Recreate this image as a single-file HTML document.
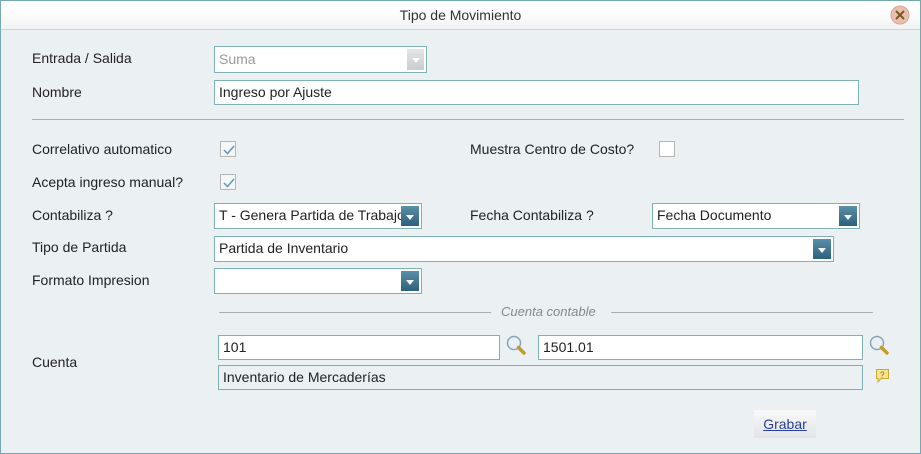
<!DOCTYPE html>
<html><head><meta charset="utf-8"><style>
*{box-sizing:border-box}
body{margin:0;width:921px;height:454px;overflow:hidden;font-family:"Liberation Sans",sans-serif;font-size:14px;color:#222}
.win{position:absolute;left:0;top:0;width:921px;height:454px;border:1px solid #74a9ad;background:#ebf0f3}
.title{position:absolute;left:0;top:0;width:919px;height:29px;background:linear-gradient(#fff 30%,#f1f2f3);border-bottom:1px solid #cfd3d5;text-align:center;line-height:29px;color:#333;font-size:14px}
.a{position:absolute}
.lbl{position:absolute;line-height:16px}
.inp{position:absolute;background:#fff;border:1px solid #7fb0b4;padding-left:4px;line-height:22px;white-space:nowrap;overflow:hidden}
.arr{position:absolute;right:2px;top:2px;bottom:2px;width:18px;background:linear-gradient(#5a8fa8,#2d607c)}
.arr:after{content:"";position:absolute;left:5px;top:9px;border-left:4px solid transparent;border-right:4px solid transparent;border-top:5px solid #fff}
.cb{position:absolute;width:16px;height:16px;border:1px solid #b5b5b5;background:#f4f6f7}
.cb svg{position:absolute;left:1px;top:1px}
</style></head><body>
<div class="win">
<div class="title">Tipo de Movimiento</div>
<svg class="a" style="left:889px;top:4px" width="20" height="20"><circle cx="10" cy="10" r="9" fill="#e9c0b0" stroke="#d8a593"/><path d="M6 6L14 14M14 6L6 14" stroke="#7a5a20" stroke-width="2"/></svg>

<div class="lbl" style="left:31px;top:49px">Entrada / Salida</div>
<div class="inp" style="left:213px;top:45px;width:213px;height:27px;color:#999;line-height:25px">Suma<div class="arr" style="background:linear-gradient(#e3e6e8,#c9cdd0);width:17px"></div></div>
<div class="lbl" style="left:31px;top:83px">Nombre</div>
<div class="inp" style="left:213px;top:79px;width:645px;height:25px">Ingreso por Ajuste</div>
<div class="a" style="left:31px;top:118px;width:872px;height:1px;background:#a8b0b3"></div>

<div class="lbl" style="left:31px;top:140px">Correlativo automatico</div>
<div class="cb" style="left:219px;top:140px"><svg width="14" height="14"><path d="M2 7L5.5 10.5L12 3" stroke="#5a9ab8" stroke-width="1.5" fill="none"/></svg></div>
<div class="lbl" style="left:469px;top:140px">Muestra Centro de Costo?</div>
<div class="cb" style="left:658px;top:140px;background:#fff"></div>
<div class="lbl" style="left:31px;top:173px">Acepta ingreso manual?</div>
<div class="cb" style="left:219px;top:173px"><svg width="14" height="14"><path d="M2 7L5.5 10.5L12 3" stroke="#5a9ab8" stroke-width="1.5" fill="none"/></svg></div>

<div class="lbl" style="left:31px;top:206px">Contabiliza ?</div>
<div class="inp" style="left:213px;top:202px;width:208px;height:26px">T - Genera Partida de Trabajo<div class="arr"></div></div>
<div class="lbl" style="left:469px;top:206px">Fecha Contabiliza ?</div>
<div class="inp" style="left:651px;top:202px;width:208px;height:26px">Fecha Documento<div class="arr"></div></div>
<div class="lbl" style="left:31px;top:238px">Tipo de Partida</div>
<div class="inp" style="left:213px;top:235px;width:620px;height:26px">Partida de Inventario<div class="arr"></div></div>
<div class="lbl" style="left:31px;top:271px">Formato Impresion</div>
<div class="inp" style="left:213px;top:267px;width:208px;height:26px"><div class="arr"></div></div>

<div class="a" style="left:218px;top:311px;width:272px;height:1px;background:#a8b0b3"></div>
<div class="lbl" style="left:500px;top:303px;font-style:italic;color:#888;font-size:13px">Cuenta contable</div>
<div class="a" style="left:610px;top:311px;width:262px;height:1px;background:#a8b0b3"></div>

<div class="lbl" style="left:31px;top:353px">Cuenta</div>
<div class="inp" style="left:217px;top:334px;width:282px;height:25px">101</div>
<svg class="a" style="left:505px;top:334px" width="22" height="22"><circle cx="8" cy="8" r="6.5" fill="#e8f0f6" stroke="#8da4b5" stroke-width="1.5"/><path d="M12.5 12.5L18 18" stroke="#c49a2a" stroke-width="3.5" stroke-linecap="round"/></svg>
<div class="inp" style="left:537px;top:334px;width:325px;height:25px">1501.01</div>
<svg class="a" style="left:868px;top:334px" width="22" height="22"><circle cx="8" cy="8" r="6.5" fill="#e8f0f6" stroke="#8da4b5" stroke-width="1.5"/><path d="M12.5 12.5L18 18" stroke="#c49a2a" stroke-width="3.5" stroke-linecap="round"/></svg>
<div class="inp" style="left:217px;top:364px;width:645px;height:25px;background:#ebf0f3">Inventario de Mercaderías</div>
<svg class="a" style="left:874px;top:367px" width="15" height="17"><path d="M1.5 1.5H13.5V10.5H6L3 14V10.5H1.5Z" fill="#f6e38c" stroke="#c9a93a"/><text x="5" y="9.5" font-size="8" fill="#8a6a10" font-family="Liberation Sans">?</text></svg>

<div class="a" style="left:753px;top:409px;width:62px;height:28px;background:linear-gradient(#f9f9f9,#e2e4e5);text-align:center;line-height:28px;color:#2a3f9a;text-decoration:underline">Grabar</div>
</div>
</body></html>
